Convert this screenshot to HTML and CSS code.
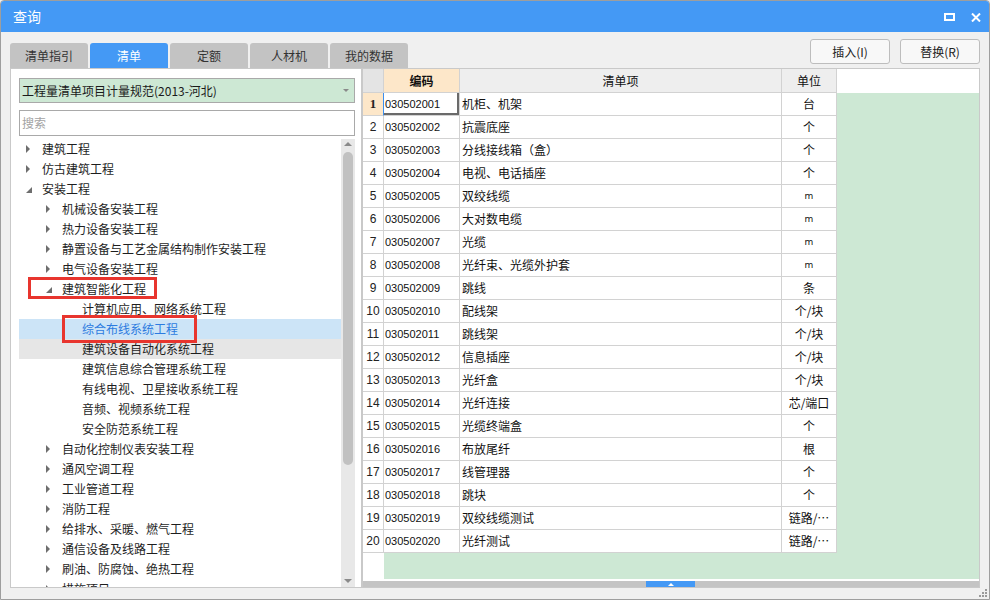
FILE: index.html
```html
<!DOCTYPE html>
<html lang="zh-CN">
<head>
<meta charset="utf-8">
<title>查询</title>
<link rel="stylesheet" href="styles.css">
</head>
<body>
<div class="win">
  <div class="titlebar">
    <span class="title">查询</span>
    <div class="tb-icons">
      <svg class="ico-max" width="11" height="8" viewBox="0 0 11 8"><rect x="1" y="1" width="9" height="6" fill="none" stroke="#fff" stroke-width="2"/></svg>
      <svg class="ico-close" width="10" height="9" viewBox="0 0 10 9"><path d="M1 0.5 L9 8.5 M9 0.5 L1 8.5" stroke="#fff" stroke-width="2"/></svg>
    </div>
  </div>
  <div class="top">
    <div class="tabs">
      <div class="tab">清单指引</div>
      <div class="tab active">清单</div>
      <div class="tab">定额</div>
      <div class="tab">人材机</div>
      <div class="tab">我的数据</div>
    </div>
    <div class="btns">
      <button class="btn">插入(I)</button>
      <button class="btn">替换(R)</button>
    </div>
  </div>
  <div class="main">
    <div class="left">
      <div class="combo"><span class="combo-text">工程量清单项目计量规范(2013-河北)</span><span class="caret"></span></div>
      <div class="search">搜索</div>
      <div class="treewrap">
        <div class="tree">
          <div class="row l1"><span class="exp"><i class="tri-r"></i></span>建筑工程</div>
          <div class="row l1"><span class="exp"><i class="tri-r"></i></span>仿古建筑工程</div>
          <div class="row l1"><span class="exp"><i class="tri-d"></i></span>安装工程</div>
          <div class="row l2"><span class="exp"><i class="tri-r"></i></span>机械设备安装工程</div>
          <div class="row l2"><span class="exp"><i class="tri-r"></i></span>热力设备安装工程</div>
          <div class="row l2"><span class="exp"><i class="tri-r"></i></span>静置设备与工艺金属结构制作安装工程</div>
          <div class="row l2"><span class="exp"><i class="tri-r"></i></span>电气设备安装工程</div>
          <div class="row l2"><span class="exp"><i class="tri-d"></i></span>建筑智能化工程</div>
          <div class="row l3"><span class="exp"></span>计算机应用、网络系统工程</div>
          <div class="row l3 sel"><span class="exp"></span>综合布线系统工程</div>
          <div class="row l3 hov"><span class="exp"></span>建筑设备自动化系统工程</div>
          <div class="row l3"><span class="exp"></span>建筑信息综合管理系统工程</div>
          <div class="row l3"><span class="exp"></span>有线电视、卫星接收系统工程</div>
          <div class="row l3"><span class="exp"></span>音频、视频系统工程</div>
          <div class="row l3"><span class="exp"></span>安全防范系统工程</div>
          <div class="row l2"><span class="exp"><i class="tri-r"></i></span>自动化控制仪表安装工程</div>
          <div class="row l2"><span class="exp"><i class="tri-r"></i></span>通风空调工程</div>
          <div class="row l2"><span class="exp"><i class="tri-r"></i></span>工业管道工程</div>
          <div class="row l2"><span class="exp"><i class="tri-r"></i></span>消防工程</div>
          <div class="row l2"><span class="exp"><i class="tri-r"></i></span>给排水、采暖、燃气工程</div>
          <div class="row l2"><span class="exp"><i class="tri-r"></i></span>通信设备及线路工程</div>
          <div class="row l2"><span class="exp"><i class="tri-r"></i></span>刷油、防腐蚀、绝热工程</div>
          <div class="row l2"><span class="exp"><i class="tri-r"></i></span>措施项目</div>
          <div class="mark m1"></div>
          <div class="mark m2"></div>
        </div>
        <div class="vscroll">
          <i class="up"></i>
          <div class="thumb"></div>
          <i class="down"></i>
        </div>
      </div>
    </div>
    <div class="right">
      <div class="gridarea">
        <div class="grid">
          <div class="c rn hd"></div><div class="c hd code-h">编码</div><div class="c hd ctr">清单项</div><div class="c hd ctr">单位</div>
          <div class="c rn rn1">1</div><div class="c code focus">030502001</div><div class="c">机柜、机架</div><div class="c ctr">台</div>
          <div class="c rn">2</div><div class="c code">030502002</div><div class="c">抗震底座</div><div class="c ctr">个</div>
          <div class="c rn">3</div><div class="c code">030502003</div><div class="c">分线接线箱（盒）</div><div class="c ctr">个</div>
          <div class="c rn">4</div><div class="c code">030502004</div><div class="c">电视、电话插座</div><div class="c ctr">个</div>
          <div class="c rn">5</div><div class="c code">030502005</div><div class="c">双绞线缆</div><div class="c ctr sm">m</div>
          <div class="c rn">6</div><div class="c code">030502006</div><div class="c">大对数电缆</div><div class="c ctr sm">m</div>
          <div class="c rn">7</div><div class="c code">030502007</div><div class="c">光缆</div><div class="c ctr sm">m</div>
          <div class="c rn">8</div><div class="c code">030502008</div><div class="c">光纤束、光缆外护套</div><div class="c ctr sm">m</div>
          <div class="c rn">9</div><div class="c code">030502009</div><div class="c">跳线</div><div class="c ctr">条</div>
          <div class="c rn">10</div><div class="c code">030502010</div><div class="c">配线架</div><div class="c ctr">个/块</div>
          <div class="c rn">11</div><div class="c code">030502011</div><div class="c">跳线架</div><div class="c ctr">个/块</div>
          <div class="c rn">12</div><div class="c code">030502012</div><div class="c">信息插座</div><div class="c ctr">个/块</div>
          <div class="c rn">13</div><div class="c code">030502013</div><div class="c">光纤盒</div><div class="c ctr">个/块</div>
          <div class="c rn">14</div><div class="c code">030502014</div><div class="c">光纤连接</div><div class="c ctr">芯/端口</div>
          <div class="c rn">15</div><div class="c code">030502015</div><div class="c">光缆终端盒</div><div class="c ctr">个</div>
          <div class="c rn">16</div><div class="c code">030502016</div><div class="c">布放尾纤</div><div class="c ctr">根</div>
          <div class="c rn">17</div><div class="c code">030502017</div><div class="c">线管理器</div><div class="c ctr">个</div>
          <div class="c rn">18</div><div class="c code">030502018</div><div class="c">跳块</div><div class="c ctr">个</div>
          <div class="c rn">19</div><div class="c code">030502019</div><div class="c">双绞线缆测试</div><div class="c ctr">链路/…</div>
          <div class="c rn">20</div><div class="c code">030502020</div><div class="c">光纤测试</div><div class="c ctr">链路/…</div>
        </div>
      </div>
      <div class="hscroll"><div class="hthumb"><i class="hup"></i></div></div>
    </div>
  </div>
  <svg class="grip" width="9" height="9" viewBox="0 0 9 9">
    <rect x="7" y="1" width="2" height="2" fill="#9a9a9a"/>
    <rect x="4" y="4" width="2" height="2" fill="#9a9a9a"/>
    <rect x="7" y="4" width="2" height="2" fill="#9a9a9a"/>
    <rect x="1" y="7" width="2" height="2" fill="#9a9a9a"/>
    <rect x="4" y="7" width="2" height="2" fill="#9a9a9a"/>
    <rect x="7" y="7" width="2" height="2" fill="#9a9a9a"/>
  </svg>
</div>
</body>
</html>
```
FILE: styles.css
```css
* { box-sizing: border-box; }
html, body { margin: 0; padding: 0; background: #f0f0f0; }
body {
  font-family: "Noto Sans CJK SC", "Liberation Sans", sans-serif;
  font-size: 12px;
  color: #1e1e1e;
}
.win {
  position: relative;
  width: 990px;
  height: 600px;
  border: 1px solid #9e9e9e;
  border-radius: 4px 4px 0 0;
  background: #f0f0f0;
  display: flex;
  flex-direction: column;
  overflow: hidden;
}
.titlebar {
  height: 31px;
  flex: none;
  background: #4499f5;
  display: flex;
  align-items: center;
  padding: 0 8px 0 12px;
}
.title {
  color: #fff;
  font-size: 14px;
  line-height: 31px;
}
.tb-icons {
  margin-left: auto;
  display: flex;
  align-items: center;
  gap: 16px;
}
.ico-max { display: block; margin-top: 1px; }
.ico-close { display: block; margin-top: 1px; }

.top {
  height: 36px;
  flex: none;
  display: flex;
  padding: 0 9px 0 9px;
}
.tabs {
  display: flex;
  gap: 2px;
  align-self: flex-end;
}
.tab {
  width: 78px;
  height: 25px;
  line-height: 25px;
  text-align: center;
  background: #c3c3c3;
  color: #333;
  border-radius: 3px 3px 0 0;
  font-size: 12px;
}
.tab.active {
  background: #4499f5;
  color: #fff;
}
.btns {
  margin-left: auto;
  margin-top: 7px;
  display: flex;
  gap: 10px;
}
.btn {
  width: 80px;
  height: 25px;
  border: 1px solid #bdbdbd;
  border-radius: 3px;
  background: #f8f8f8;
  font-family: "Noto Sans CJK SC", "Liberation Sans", sans-serif;
  font-size: 12px;
  color: #222;
  padding: 0;
}

.main {
  height: 520px;
  flex: none;
  display: flex;
  padding-left: 9px;
}
.left {
  width: 352px;
  height: 520px;
  border: 1px solid #c9c9c9;
  background: #fff;
  padding: 9px 6px 0 8px;
  display: flex;
  flex-direction: column;
}
.combo {
  height: 25px;
  flex: none;
  border: 1px solid #a9a9a9;
  background: #cde8d4;
  display: flex;
  align-items: center;
  padding: 0 5px 0 2px;
  font-family: "Noto Sans CJK SC", sans-serif;
}
.combo-text { flex: 1; color: #1a1a1a; }
.caret {
  width: 0; height: 0;
  border-left: 3px solid transparent;
  border-right: 3px solid transparent;
  border-top: 3px solid #8a8a8a;
}
.search {
  margin-top: 7px;
  height: 26px;
  flex: none;
  border: 1px solid #a9a9a9;
  color: #a3a3a3;
  padding-left: 2px;
  line-height: 24px;
}
.treewrap {
  margin-top: 3px;
  flex: 1;
  display: flex;
  overflow: hidden;
}
.tree {
  position: relative;
  flex: 1;
  overflow: hidden;
}
.row {
  height: 20px;
  line-height: 20px;
  white-space: nowrap;
  color: #1e1e1e;
  display: flex;
  align-items: center;
}
.row.l1 { padding-left: 7px; }
.row.l2 { padding-left: 27px; }
.row.l3 { padding-left: 47px; }
.row.sel { background: #cce4f7; color: #2c7be0; }
.row.hov { background: #e6e6e6; }
.exp {
  width: 16px;
  height: 20px;
  flex: none;
  position: relative;
}
.tri-r {
  position: absolute;
  left: 0;
  top: 6px;
  width: 0; height: 0;
  border-top: 4px solid transparent;
  border-bottom: 4px solid transparent;
  border-left: 4px solid #6e6e6e;
}
.tri-d {
  position: absolute;
  left: 0;
  top: 8px;
  width: 0; height: 0;
  border-left: 6px solid transparent;
  border-bottom: 6px solid #6e6e6e;
}
.mark {
  position: absolute;
  border: 3px solid #e8352e;
}
.m1 { left: 9px; top: 138px; width: 129px; height: 22px; }
.m2 { left: 43px; top: 176px; width: 135px; height: 28px; }

.vscroll {
  width: 14px;
  flex: none;
  background: #e8e8e8;
  display: flex;
  flex-direction: column;
  align-items: center;
}
.up {
  margin-top: 3px;
  width: 0; height: 0;
  border-left: 4px solid transparent;
  border-right: 4px solid transparent;
  border-bottom: 4px solid #8a8a8a;
}
.thumb {
  margin-top: 6px;
  width: 10px;
  height: 313px;
  border-radius: 5px;
  background: #c1c1c1;
}
.down {
  margin-top: auto;
  margin-bottom: 4px;
  width: 0; height: 0;
  border-left: 4px solid transparent;
  border-right: 4px solid transparent;
  border-top: 4px solid #8a8a8a;
}

.right {
  width: 618px;
  height: 520px;
  border: 1px solid #c9c9c9;
  background: #fff;
  display: flex;
  flex-direction: column;
}
.gridarea {
  flex: 1;
  background: #fff linear-gradient(#cde8d4, #cde8d4) no-repeat 21px 24px / calc(100% - 21px) calc(100% - 24px);
  overflow: hidden;
}
.grid {
  display: grid;
  grid-template-columns: 21px 76px 322px 55px;
  grid-template-rows: 24px repeat(20, 23px);
  width: 474px;
}
.c {
  border-right: 1px solid #d2d2d2;
  border-bottom: 1px solid #d2d2d2;
  background: #fff;
  padding-left: 2px;
  line-height: 22px;
  white-space: nowrap;
  overflow: hidden;
  color: #111;
}
.c.ctr { text-align: center; padding-left: 0; }
.c.sm { font-family: "DejaVu Sans", sans-serif; font-size: 9px; }
.c.hd { background: #eeeeee; line-height: 23px; }
.c.rn {
  text-align: center;
  padding-left: 0;
  font-family: "Liberation Sans", sans-serif;
  font-size: 12px;
  color: #222;
}
.c.rn.hd { background: #e4e4e4; }
.c.code-h { background: #fde7c9; font-weight: bold; text-align: center; padding-left: 0; }
.c.rn1 {
  background: #fde7c9;
  font-family: "Liberation Serif", serif;
  font-weight: bold;
  font-size: 13px;
  border-right-color: #3b8ff0;
}
.c.code {
  font-family: "Liberation Sans", sans-serif;
  font-size: 11px;
  padding-left: 1px;
}
.c.focus {
  box-shadow: inset -2px -2px 0 #6a6a6a;
}
.hscroll {
  margin-top: 2px;
  height: 6px;
  flex: none;
  background: #c4c4c4;
}
.hthumb {
  margin-left: 283px;
  width: 49px;
  height: 6px;
  background: #4499f5;
  display: flex;
  justify-content: center;
  align-items: center;
}
.hup {
  width: 0; height: 0;
  border-left: 3px solid transparent;
  border-right: 3px solid transparent;
  border-bottom: 3px solid #fff;
}
.grip {
  position: absolute;
  right: 2px;
  bottom: 2px;
}
```
